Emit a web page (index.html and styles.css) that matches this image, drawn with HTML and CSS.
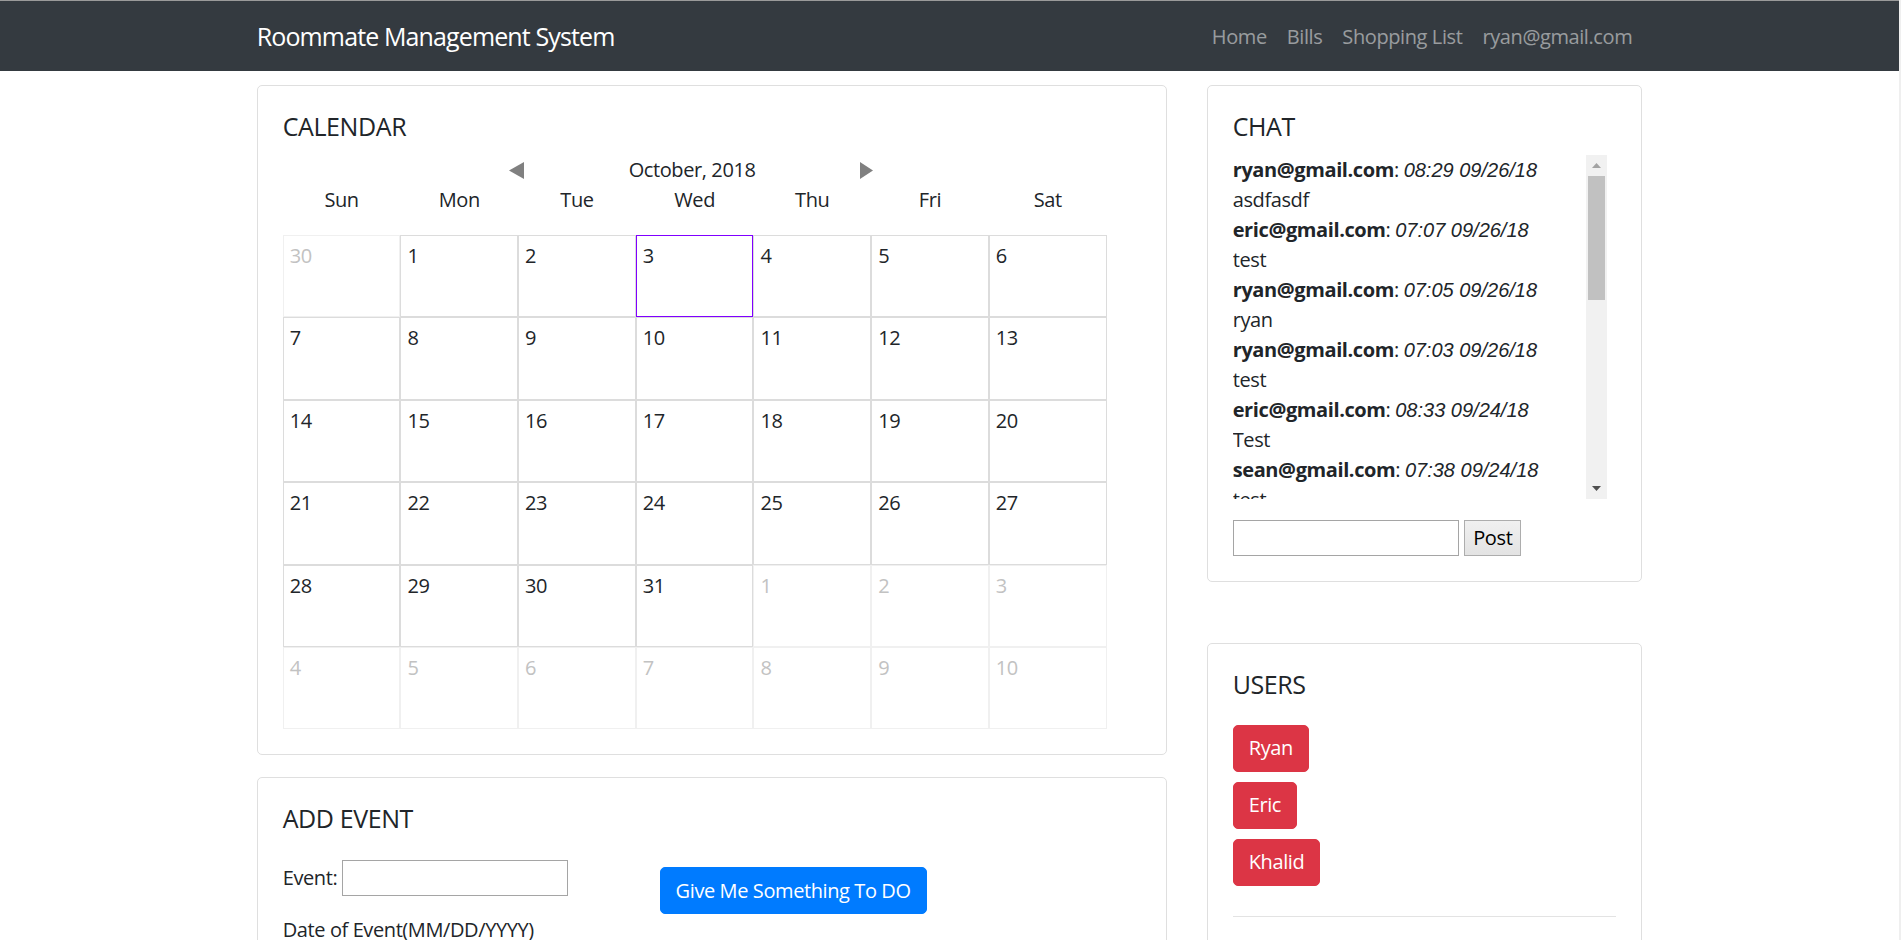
FILE: index.html
```html
<!DOCTYPE html>
<html lang="en">
<head>
<meta charset="utf-8">
<title>Roommate Management System</title>
<link rel="stylesheet" href="styles.css">
</head>
<body>
<nav class="navbar">
  <div class="navbar-inner">
    <a class="brand" href="#">Roommate Management System</a>
    <ul class="nav-links">
      <li><a href="#">Home</a></li>
      <li><a href="#">Bills</a></li>
      <li><a href="#">Shopping List</a></li>
      <li><a href="#">ryan@gmail.com</a></li>
    </ul>
  </div>
</nav>

<main class="layout">
  <div class="col-main">
    <section class="card calendar-card">
      <h5 class="card-title">CALENDAR</h5>
      <div class="month-nav">
        <span class="arrow arrow-prev"><svg width="15" height="17" viewBox="0 0 15 17"><polygon points="15,0 15,17 0,8.5" fill="#808080"/></svg></span>
        <span class="month-title">October, 2018</span>
        <span class="arrow arrow-next"><svg width="13" height="17" viewBox="0 0 13 17"><polygon points="0,0 0,17 13,8.5" fill="#808080"/></svg></span>
      </div>
      <div class="weekdays">
        <span>Sun</span><span>Mon</span><span>Tue</span><span>Wed</span><span>Thu</span><span>Fri</span><span>Sat</span>
      </div>
      <div class="month-grid">
        <div class="day other">30</div>
        <div class="day">1</div>
        <div class="day">2</div>
        <div class="day today">3</div>
        <div class="day">4</div>
        <div class="day">5</div>
        <div class="day">6</div>
        <div class="day">7</div>
        <div class="day">8</div>
        <div class="day">9</div>
        <div class="day">10</div>
        <div class="day">11</div>
        <div class="day">12</div>
        <div class="day">13</div>
        <div class="day">14</div>
        <div class="day">15</div>
        <div class="day">16</div>
        <div class="day">17</div>
        <div class="day">18</div>
        <div class="day">19</div>
        <div class="day">20</div>
        <div class="day">21</div>
        <div class="day">22</div>
        <div class="day">23</div>
        <div class="day">24</div>
        <div class="day">25</div>
        <div class="day">26</div>
        <div class="day">27</div>
        <div class="day">28</div>
        <div class="day">29</div>
        <div class="day">30</div>
        <div class="day">31</div>
        <div class="day other">1</div>
        <div class="day other">2</div>
        <div class="day other">3</div>
        <div class="day other">4</div>
        <div class="day other">5</div>
        <div class="day other">6</div>
        <div class="day other">7</div>
        <div class="day other">8</div>
        <div class="day other">9</div>
        <div class="day other">10</div>
      </div>
    </section>

    <section class="card event-card">
      <h5 class="card-title">ADD EVENT</h5>
      <div class="event-body">
        <form class="event-form">
          <div class="field-row">
            <label for="ev-name">Event:</label>
            <input id="ev-name" class="plain-input" type="text">
          </div>
          <label class="field-label" for="ev-date">Date of Event(MM/DD/YYYY)</label>
          <input id="ev-date" class="plain-input" type="text">
        </form>
        <div class="event-actions">
          <button class="btn btn-primary" type="button">Give Me Something To DO</button>
        </div>
      </div>
    </section>
  </div>

  <div class="col-side">
    <section class="card chat-card">
      <h5 class="card-title">CHAT</h5>
      <div class="chat-box">
        <div class="chat-messages">
          <div class="msg-head"><b>ryan@gmail.com</b>: <i>08:29 09/26/18</i></div>
          <div class="msg-text">asdfasdf</div>
          <div class="msg-head"><b>eric@gmail.com</b>: <i>07:07 09/26/18</i></div>
          <div class="msg-text">test</div>
          <div class="msg-head"><b>ryan@gmail.com</b>: <i>07:05 09/26/18</i></div>
          <div class="msg-text">ryan</div>
          <div class="msg-head"><b>ryan@gmail.com</b>: <i>07:03 09/26/18</i></div>
          <div class="msg-text">test</div>
          <div class="msg-head"><b>eric@gmail.com</b>: <i>08:33 09/24/18</i></div>
          <div class="msg-text">Test</div>
          <div class="msg-head"><b>sean@gmail.com</b>: <i>07:38 09/24/18</i></div>
          <div class="msg-text">test</div>
        </div>
        <div class="scrollbar">
          <div class="sb-btn"><svg width="9" height="5" viewBox="0 0 9 5"><polygon points="0,5 9,5 4.5,0" fill="#a3a3a3"/></svg></div>
          <div class="sb-thumb"></div>
          <div class="sb-track"></div>
          <div class="sb-btn"><svg width="9" height="5" viewBox="0 0 9 5"><polygon points="0,0 9,0 4.5,5" fill="#505050"/></svg></div>
        </div>
      </div>
      <div class="chat-form">
        <input class="plain-input chat-input" type="text">
        <button class="plain-button" type="button">Post</button>
      </div>
    </section>

    <section class="card users-card">
      <h5 class="card-title">USERS</h5>
      <div class="user-list">
        <button class="btn btn-danger" type="button">Ryan</button>
        <button class="btn btn-danger" type="button">Eric</button>
        <button class="btn btn-danger" type="button">Khalid</button>
      </div>
      <hr class="divider">
      <div class="users-footer"></div>
    </section>
  </div>
</main>
</body>
</html>
```

FILE: styles.css
```css
* {
  box-sizing: border-box;
}

html {
  background: #efefef;
  overflow: hidden;
}

body {
  margin: 0;
  width: 1899px;
  min-height: 940px;
  background: #fff;
  font-family: "Open Sans", "Noto Sans", Arial, sans-serif;
  font-size: 20px;
  line-height: 1.5;
  color: #212529;
  letter-spacing: -0.02em;
}

/* ---------- navbar ---------- */
.navbar {
  background: #343a40;
  border-top: 1px solid #9a9a9a;
  height: 71px;
}

.navbar-inner {
  width: 1385.6px;
  height: 100%;
  margin: 0 auto;
  padding-top: 2px;
  display: flex;
  align-items: center;
  justify-content: space-between;
}

.brand {
  color: #fff;
  text-decoration: none;
  font-size: 25px;
  line-height: 37.5px;
  letter-spacing: -0.035em;
}

.nav-links {
  list-style: none;
  margin: 0;
  padding: 0;
  display: flex;
}

.nav-links a {
  display: block;
  padding: 0 10px;
  color: rgba(255, 255, 255, 0.5);
  text-decoration: none;
  line-height: 30px;
}

/* ---------- layout ---------- */
.layout {
  width: 1385.6px;
  margin: 14px auto 0;
  display: grid;
  grid-template-columns: 910px 435.6px;
  column-gap: 40px;
  align-items: start;
}

.card {
  background: #fff;
  border: 1px solid #dfdfdf;
  border-radius: 5px;
  padding: 25px;
}

.card-title {
  margin: 0 0 10px;
  font-size: 25px;
  font-weight: 400;
  line-height: 30px;
}

/* ---------- calendar ---------- */
.month-nav {
  display: flex;
  align-items: center;
  height: 30px;
  margin-top: 14px;
  padding-left: 226.4px;
}

.arrow {
  display: flex;
  align-items: center;
}

.month-title {
  width: 336px;
  text-align: center;
  line-height: 30px;
}

.weekdays {
  display: grid;
  grid-template-columns: repeat(7, 117.7px);
  line-height: 30px;
  text-align: center;
  margin-bottom: 20px;
}

.month-grid {
  display: grid;
  grid-template-columns: repeat(7, 117.7px);
  grid-auto-rows: 82.4px;
}

.day {
  border: 1px solid #dcdcdc;
  padding: 5px 6px;
  line-height: 30px;
}

.day.other {
  border-color: #f0f0f0;
  color: #c2c2c2;
}

.day.today {
  border-color: #8000ff;
}

/* ---------- add event ---------- */
.event-card {
  margin-top: 21.7px;
  min-height: 300px;
}

.event-body {
  display: flex;
}

.event-form {
  width: 376.9px;
}

.field-row {
  display: flex;
  align-items: center;
  margin-top: 17px;
  margin-bottom: 19px;
}

.field-row label {
  margin-right: 5px;
}

.field-label {
  display: block;
  line-height: 30px;
}

.plain-input {
  width: 226px;
  height: 36px;
  border: 1px solid #a5a5a5;
  background: #fff;
  font: inherit;
  padding: 1px 3px;
}

.event-actions {
  padding-top: 24.3px;
}

.btn {
  display: inline-block;
  font: inherit;
  letter-spacing: inherit;
  line-height: 30px;
  padding: 7.5px 15px;
  border: 1px solid transparent;
  border-radius: 5px;
  color: #fff;
  cursor: pointer;
}

.btn-primary {
  background: #007bff;
  border-color: #007bff;
}

.btn-danger {
  background: #dc3545;
  border-color: #dc3545;
}

/* ---------- chat ---------- */
.chat-box {
  margin-top: 14.3px;
  width: 374px;
  height: 343.75px;
  display: flex;
}

.chat-messages {
  flex: 1;
  overflow: hidden;
  line-height: 30px;
}

.msg-head b {
  font-weight: 700;
}

.msg-head i {
  font-family: "Liberation Sans", Arial, sans-serif;
  font-style: italic;
  letter-spacing: 0;
}

.scrollbar {
  width: 21px;
  background: #f1f1f1;
  display: flex;
  flex-direction: column;
  align-items: center;
}

.sb-btn {
  height: 21px;
  width: 100%;
  display: flex;
  align-items: center;
  justify-content: center;
}

.sb-thumb {
  width: 17px;
  height: 124px;
  background: #c1c1c1;
}

.sb-track {
  flex: 1;
}

.chat-form {
  display: flex;
  align-items: center;
  gap: 5.6px;
  margin-top: 21px;
}

.plain-button {
  height: 36px;
  width: 57px;
  font: inherit;
  letter-spacing: inherit;
  line-height: 1;
  color: #000;
  border: 1px solid #adadad;
  background: linear-gradient(#f0f0f0, #e3e3e3);
  padding: 0;
}

/* ---------- users ---------- */
.users-card {
  margin-top: 61px;
}

.user-list {
  display: flex;
  flex-direction: column;
  align-items: flex-start;
  gap: 10px;
  margin-top: 25.6px;
}

.divider {
  margin: 30px 0 0;
  border: 0;
  border-top: 1px solid #e3e3e3;
}

.users-footer {
  height: 120px;
}
```
